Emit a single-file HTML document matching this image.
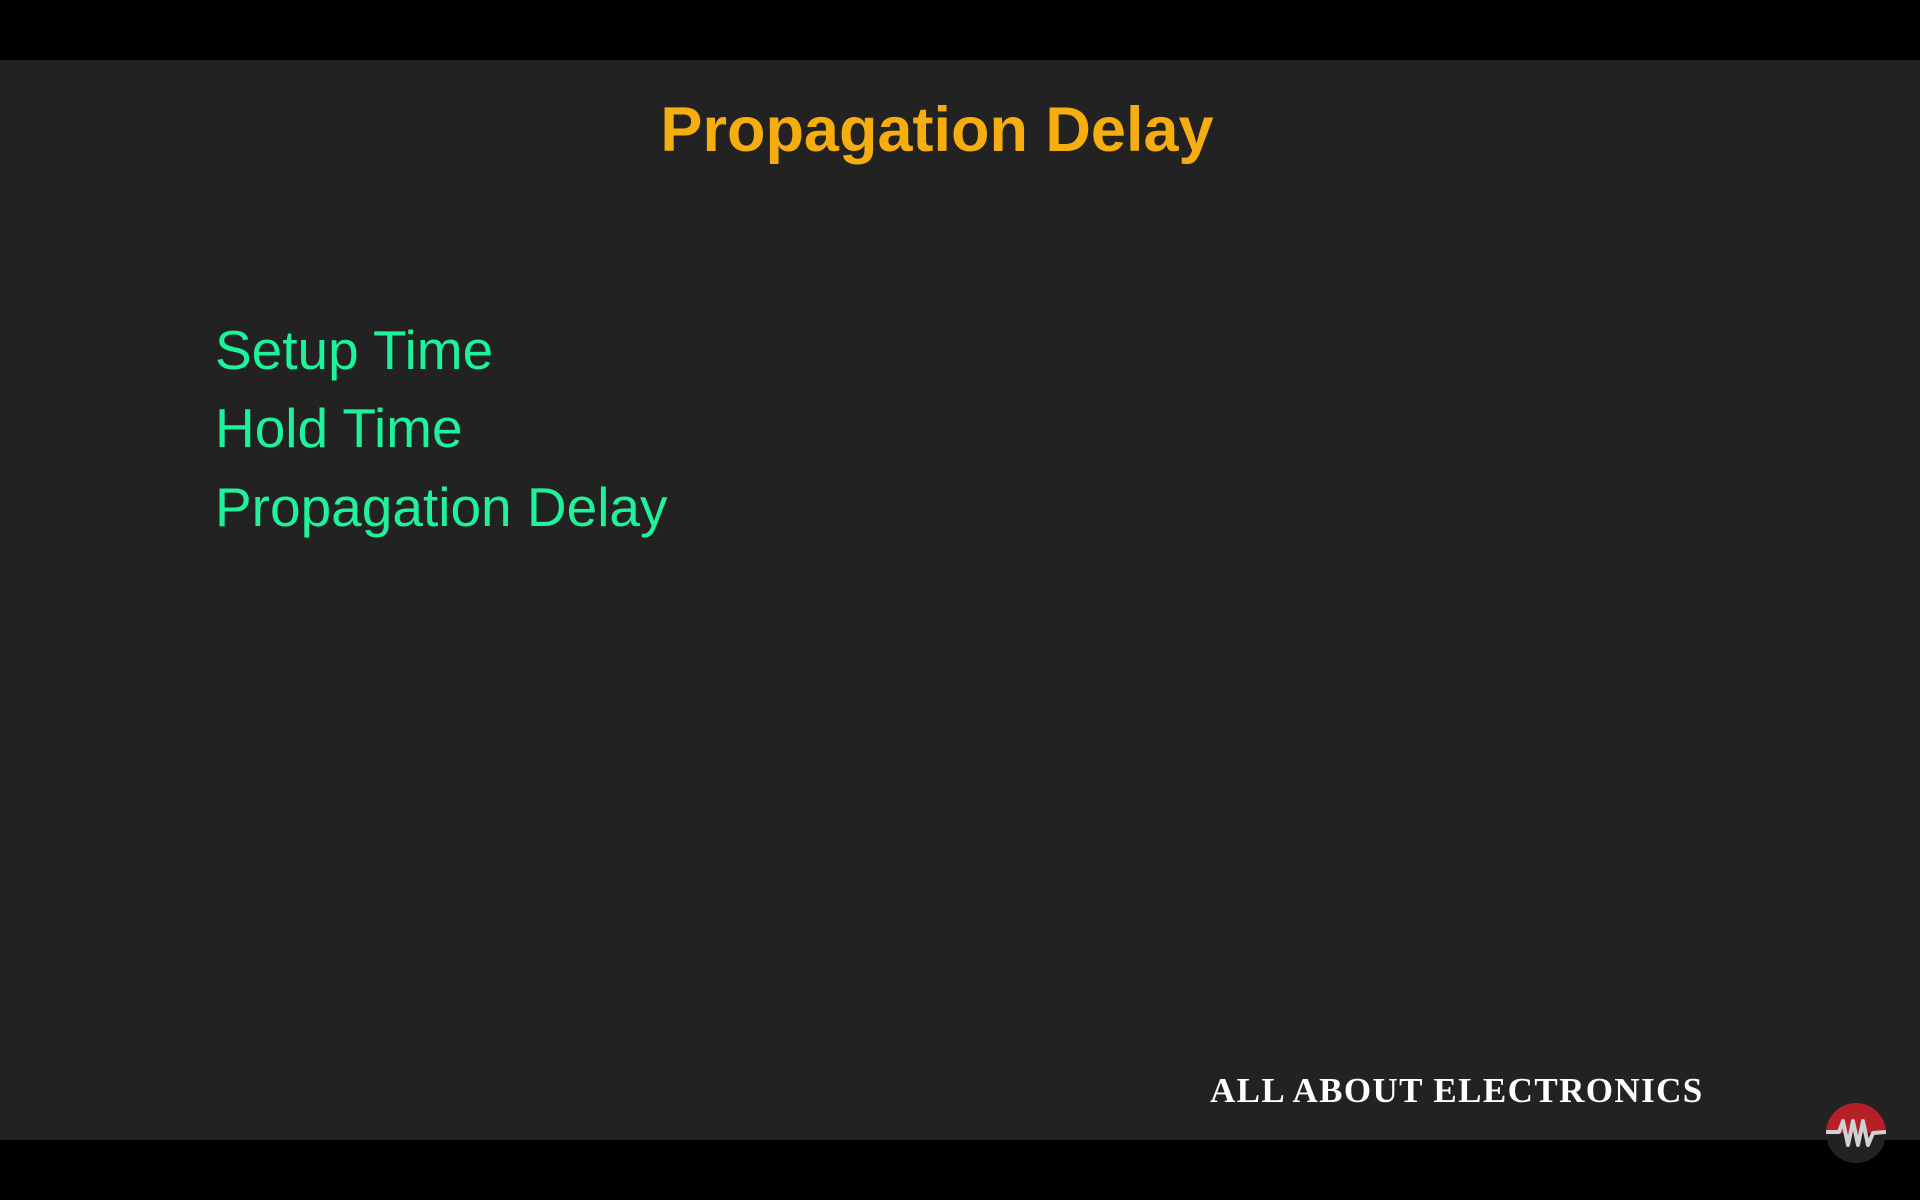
<!DOCTYPE html>
<html><head><meta charset="utf-8"><style>
html,body{margin:0;padding:0}
body{width:1920px;height:1200px;background:#000;position:relative;overflow:hidden}
.slide{position:absolute;left:0;top:60px;width:1920px;height:1080px;background:#222222}
.t{position:absolute;white-space:nowrap;line-height:1}
.title{left:0;width:1874px;text-align:center;top:94px;font:bold 63px "Liberation Sans",sans-serif;color:#f5ad10}
.g{left:215px;font:55px "Liberation Sans",sans-serif;color:#1ef29a}
.brand{left:1210px;top:1071px;font:bold 35px "Liberation Serif",serif;color:#fff;letter-spacing:1.4px}
</style></head><body>
<div class="slide"></div>
<div class="t title">Propagation Delay</div>
<div class="t g" style="top:318px">Setup Time</div>
<div class="t g" style="top:396px">Hold Time</div>
<div class="t g" style="top:475px">Propagation Delay</div>
<div class="t brand">ALL ABOUT ELECTRONICS</div>
<svg style="position:absolute;left:1826px;top:1103px" width="60" height="60" viewBox="0 0 60 60">
<defs><clipPath id="c"><circle cx="30" cy="30" r="30"/></clipPath></defs>
<g clip-path="url(#c)">
<rect x="0" y="0" width="60" height="30" fill="#b52026"/>
<rect x="0" y="30" width="60" height="30" fill="#222"/>
<polyline points="0,29 13,29 17,18 22,42 27,18 32,42 37,18 42,42 47,30 60,29" fill="none" stroke="#d0d0d0" stroke-width="4" stroke-linejoin="round"/>
</g></svg>
</body></html>
